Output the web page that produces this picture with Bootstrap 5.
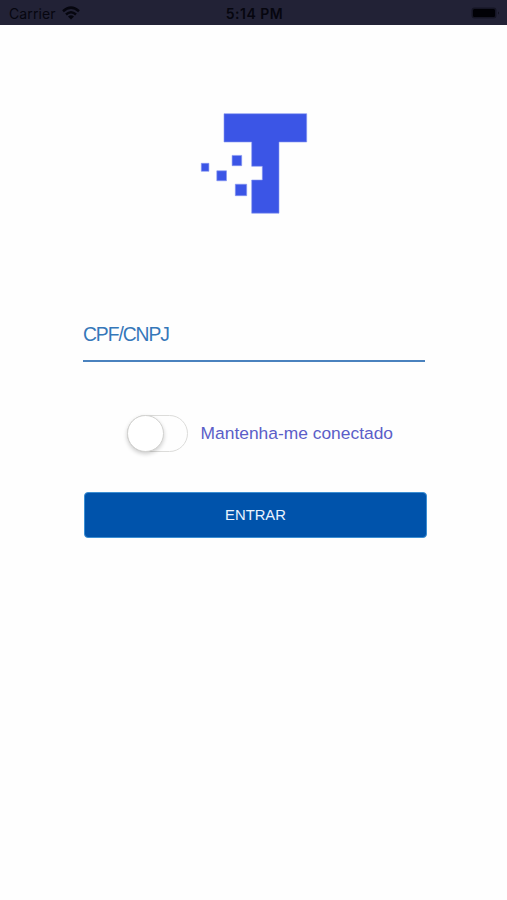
<!DOCTYPE html>
<html lang="pt-BR">
<head>
<meta charset="utf-8">
<meta name="viewport" content="width=device-width, initial-scale=1">
<title>Entrar</title>
<link href="https://cdn.jsdelivr.net/npm/bootstrap@5.3.0/dist/css/bootstrap.min.css" rel="stylesheet">
<style>
body{font-family:"Liberation Sans",Arial,sans-serif;background:#fefefe;min-height:900px;overflow:hidden}
.status-bar{height:25px;background:#222236;color:#06060f;font:400 14px/24px Inter,sans-serif;padding:2px 7px 0 9px}
.status-bar>div{flex:1 1 0}
.carrier{letter-spacing:.1px}
.wifi{margin:-2px 0 0 6px}
.clock{font-weight:600;font-size:14px;letter-spacing:.5px}
.logo{margin-top:83px}
.login-form{width:342px;margin:93px 0 0 83px}
.login-form .doc-input{height:49px;border-bottom:2px solid #4a82be!important;font-size:19.3px;letter-spacing:-1.05px;color:#3577b9;padding:0 0 4px}
.doc-input::placeholder{color:#3577b9;opacity:1}
.doc-input:focus{box-shadow:none}
.keep-row{margin:52px 0 0 44px;gap:12.6px;height:38px}
.toggle{width:61px;height:37px;border:1.5px solid #dcdcda;border-radius:19px;background:#fefefe}
.toggle span{display:block;width:37px;height:37px;margin:-1px;border-radius:50%;background:#fff;border:1px solid #d2d2d0;box-shadow:0 2px 4px rgba(0,0,0,.2)}
.keep-label{font-size:17.4px;color:#5b5ec8;white-space:nowrap}
.login-form .enter-btn{width:343px;height:46px;margin:40px 0 0 1px;background:#0053ab;border:1px solid #3c8fd3;border-radius:4px;color:#e9f3ff;font-size:14.8px;padding:1px 0 0}
</style>
</head>
<body>
<header class="status-bar d-flex align-items-center">
  <div class="d-flex align-items-center">
    <span class="carrier">Carrier</span>
    <svg class="wifi" width="18" height="14" viewBox="0 0 18 14" fill="none" stroke="#06060f" stroke-width="2.5"><path d="M1 5.2Q9-1.9 17 5.2M4 8.5Q9 4.1 14 8.5"/><path d="M6 10.4Q9 8 12 10.4L9 13.5Z" fill="#06060f" stroke="none"/></svg>
  </div>
  <span class="clock">5:14 PM</span>
  <div class="d-flex justify-content-end">
    <svg width="30" height="13" viewBox="0 0 30 13"><rect x="1.5" y=".5" width="25" height="11" rx="3" fill="#151524"/><rect x="3" y="2" width="22" height="8" rx="1.5" fill="#010106"/><path d="M28 4.5q2 1.5 0 3z" fill="#10101e"/></svg>
  </div>
</header>
<main>
  <svg class="logo d-block" width="507" height="112" viewBox="0 108 507 112" fill="#3b55e6" stroke="#8797f2" stroke-width=".6"><path d="M224 113.7H306.7V142H279V213.2H251.7V180H262.3V166.3H251.7V142H224Z"/><path d="M201.3 163.3h7.6v8h-7.6zM216.8 170.8h9.7v10h-9.7zM232.1 155.4h9.6v10.3h-9.6zM235.3 184.2h11.4v11.5h-11.4z"/></svg>
  <form class="login-form">
    <input class="doc-input form-control border-0 rounded-0 bg-transparent" type="text" placeholder="CPF/CNPJ" aria-label="CPF/CNPJ">
    <div class="keep-row d-flex align-items-center">
      <div class="toggle flex-shrink-0" role="switch" aria-checked="false"><span></span></div>
      <span class="keep-label">Mantenha-me conectado</span>
    </div>
    <button class="enter-btn btn d-block" type="button">ENTRAR</button>
  </form>
</main>
<script src="https://cdn.jsdelivr.net/npm/bootstrap@5.3.0/dist/js/bootstrap.bundle.min.js"></script>
</body>
</html>
